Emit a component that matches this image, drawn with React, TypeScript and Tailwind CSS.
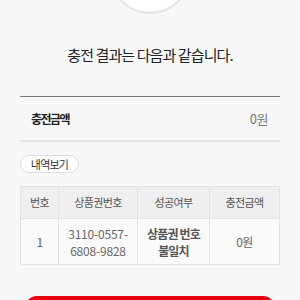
export default function App() {
  const font = { fontFamily: '"Noto Sans CJK KR", "Noto Sans", sans-serif' };
  const cell = "flex items-center justify-center border-r border-b border-[#e2e2e2] text-center";
  return (
    <div
      className="w-[300px] h-[300px] overflow-hidden bg-[#f8f8f8] text-[#222] flex flex-col"
      style={font}
    >
      {/* 상단 아이콘 원 */}
      <div className="flex justify-center h-[14px] shrink-0">
        <div className="shrink-0 mt-[-68px] w-[82px] h-[82px] rounded-full bg-white border-2 border-[#e4e4e4]" />
      </div>

      <h1 className="shrink-0 mt-[29px] h-6 text-center text-[15px] tracking-[-0.9px] leading-6 text-[#222]">
        충전 결과는 다음과 같습니다.
      </h1>

      <div className="shrink-0 mx-5 mt-[29px] h-px bg-[#777]" />

      <div className="shrink-0 mx-5 flex items-center justify-between h-[45px] pl-[11px] pr-[12px] border-b-2 border-[#e2e2e2]">
        <span className="text-[12px] tracking-[-1.5px] font-bold">충전금액</span>
        <span className="text-[13px] tracking-[-0.5px] text-[#777]">0원</span>
      </div>

      <div className="shrink-0 mx-5 flex h-[44px] items-center">
        <button className="h-[18px] w-[59px] rounded-full border border-[#dcdcdc] bg-white text-[11px] tracking-[-0.8px] leading-none text-[#333]">
          내역보기
        </button>
      </div>

      {/* 내역 테이블 */}
      <div className="shrink-0 mx-5 grid grid-cols-[38px_79px_72px_1fr] border-l border-t border-[#e2e2e2] text-[11px] tracking-[-0.6px]">
        <div className={`${cell} h-[32px] bg-[#efefef] text-[#555]`}>번호</div>
        <div className={`${cell} h-[32px] bg-[#efefef] text-[#555]`}>상품권번호</div>
        <div className={`${cell} h-[32px] bg-[#efefef] text-[#555]`}>성공여부</div>
        <div className={`${cell} h-[32px] bg-[#efefef] text-[#555]`}>충전금액</div>
        <div className={`${cell} h-[46px] bg-[#fafafa] text-[#666] text-[12px]`}>1</div>
        <div className={`${cell} h-[46px] bg-[#fafafa] text-[#666] text-[12px] leading-[17px] tracking-[-0.2px]`}>
          3110-0557-
          <br />
          6808-9828
        </div>
        <div className={`${cell} h-[46px] bg-[#fafafa] text-[#555] text-[12px] leading-[17px] tracking-[-0.8px] font-bold`}>
          상품권 번호
          <br />
          불일치
        </div>
        <div className={`${cell} h-[46px] bg-[#fafafa] text-[#666] text-[12px]`}>0원</div>
      </div>

      <div className="shrink-0 mx-[25px] mt-[31px] h-[40px] rounded-[12px] bg-[#e60012]" />
    </div>
  );
}
